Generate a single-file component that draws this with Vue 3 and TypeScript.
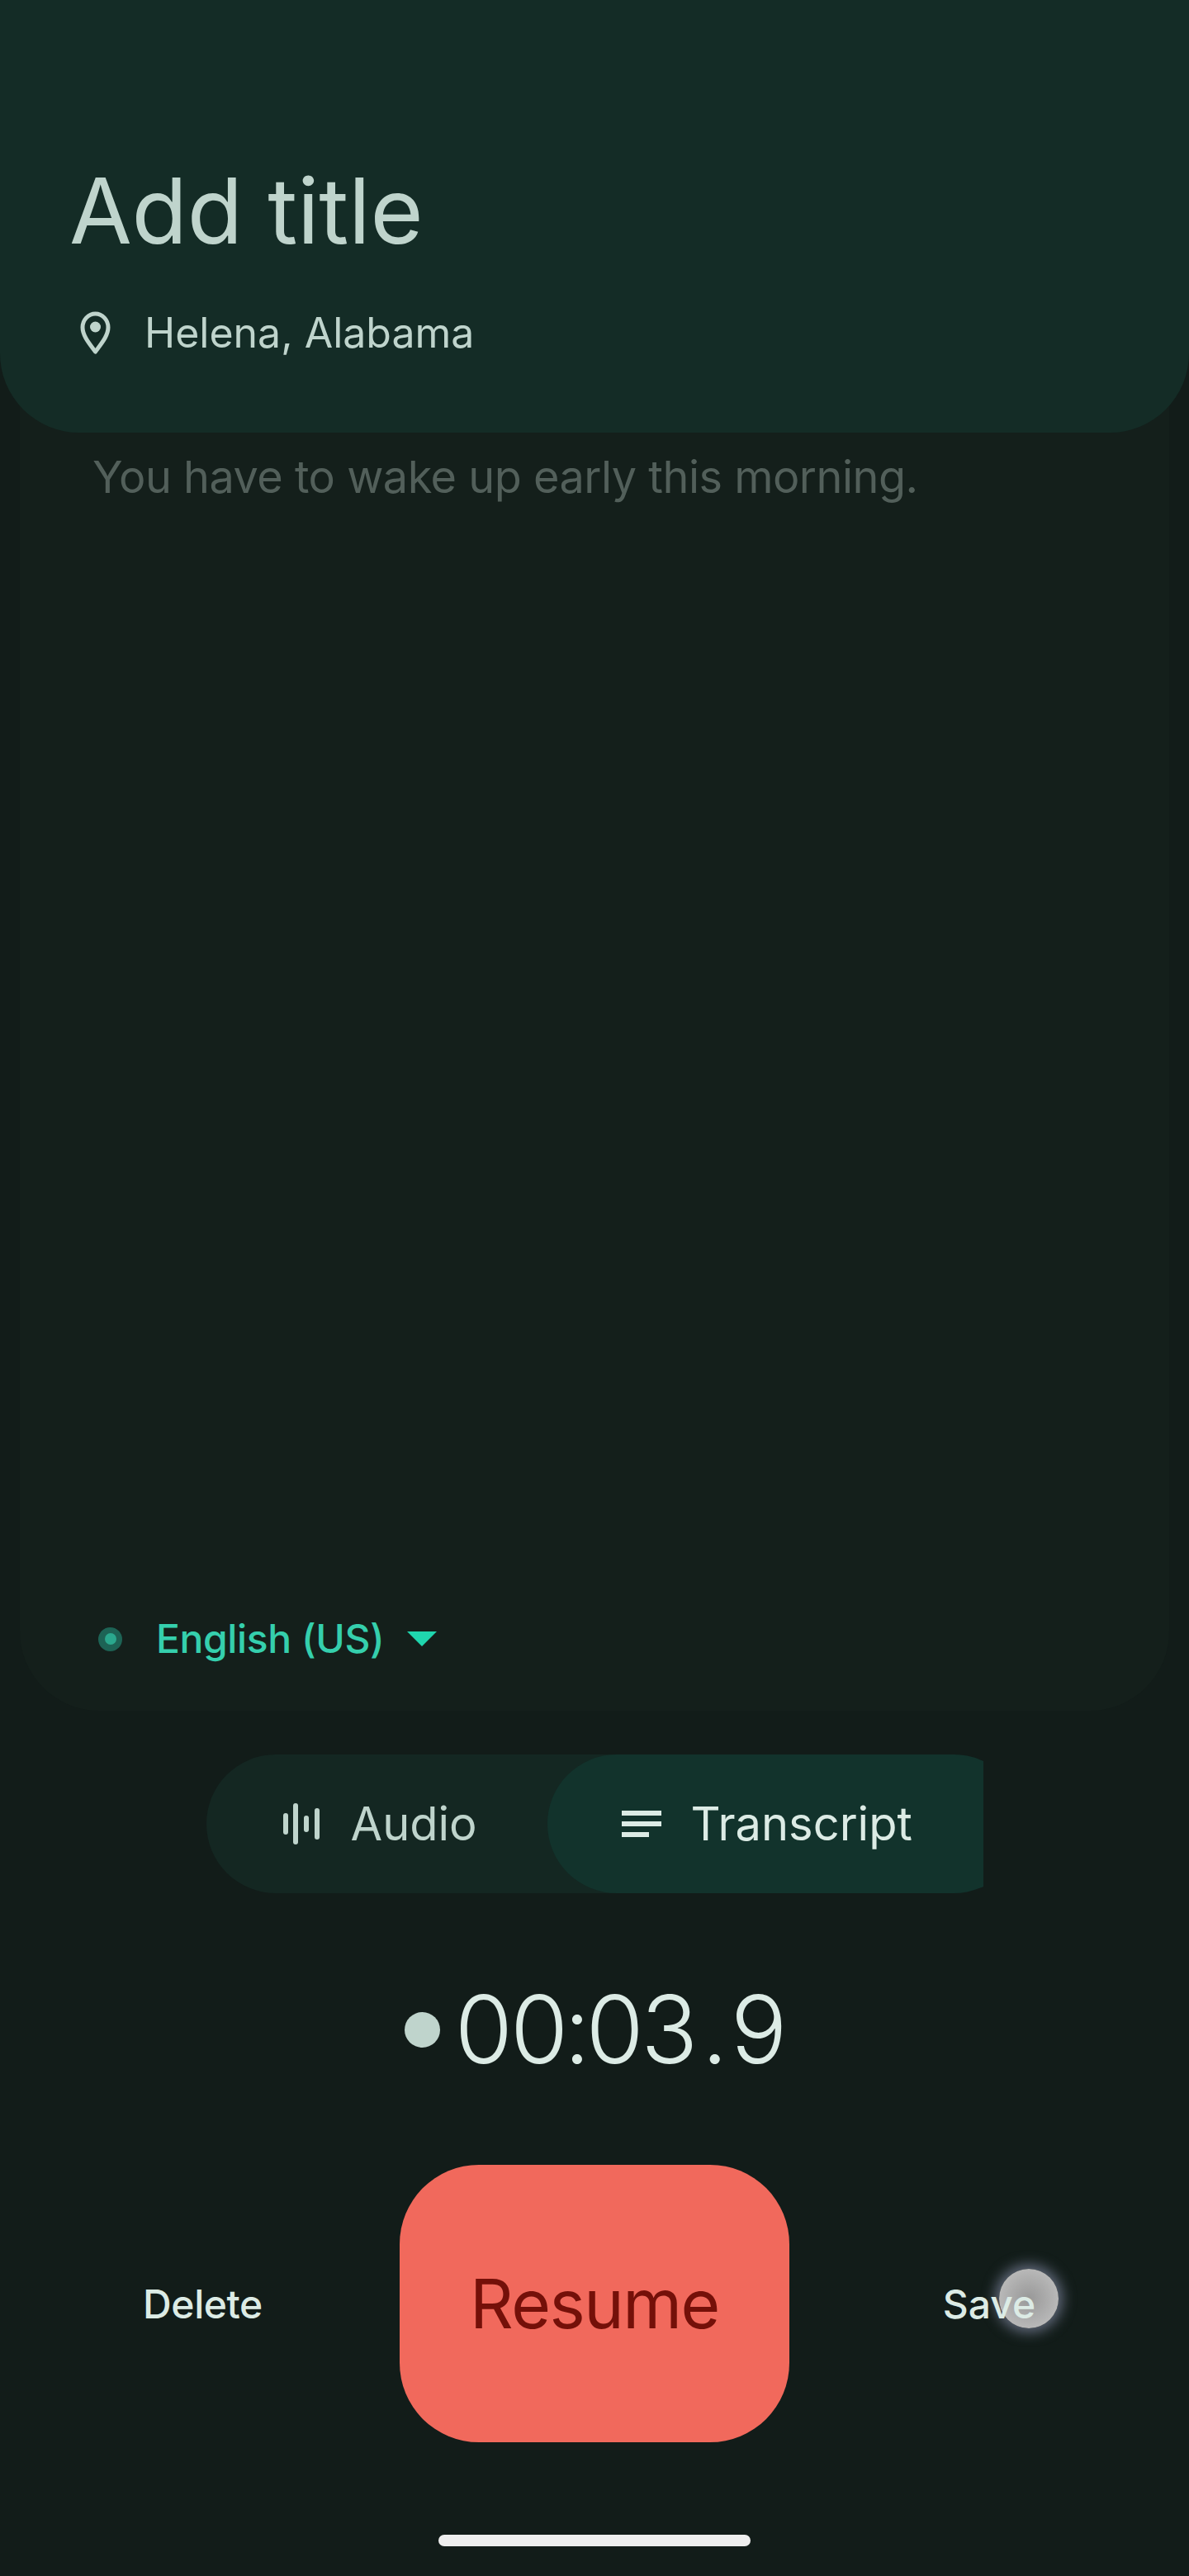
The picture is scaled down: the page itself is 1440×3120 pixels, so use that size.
<script setup lang="ts">
const bars: { h: number }[] = [{ h: 26 }, { h: 50 }, { h: 20 }, { h: 38 }]
</script>

<template>
  <div class="screen">
    <header class="head">
      <h1 class="title">Add title</h1>
      <div class="place">
        <svg class="pin" viewBox="0 0 37 53" width="37" height="53" aria-hidden="true">
          <path d="M18.5 49 C12 40 3 30 3 19.5 C3 10.5 10 3 18.5 3 C27 3 34 10.5 34 19.5 C34 30 25 40 18.5 49 Z" fill="none" stroke="#bfd4cc" stroke-width="5" stroke-linejoin="round" />
          <circle cx="18.5" cy="19" r="6.5" fill="#bfd4cc" />
        </svg>
        <span>Helena, Alabama</span>
      </div>
    </header>

    <section class="card">
      <p class="line">You have to wake up early this morning.</p>
      <div class="lang">
        <span class="live"><i></i></span>
        <span class="lang-name">English (US)</span>
        <span class="caret"></span>
      </div>
    </section>

    <nav class="seg">
      <div class="tab tab-audio">
        <span class="wave">
          <i v-for="(b, n) in bars" :key="n" :style="{ height: b.h + 'px' }"></i>
        </span>
        <span>Audio</span>
      </div>
      <div class="tab tab-text">
        <span class="lines"><i></i><i></i><i class="short"></i></span>
        <span>Transcript</span>
      </div>
    </nav>

    <div class="timer">
      <span class="rec"></span>
      <span class="time">00:03<span class="dot">.</span>9</span>
    </div>

    <div class="actions">
      <button class="text-btn delete">Delete</button>
      <button class="resume">Resume</button>
      <button class="text-btn save">Save<span class="touch"></span></button>
    </div>

    <div class="home"></div>
  </div>
</template>

<style scoped>
.screen {
  width: 1440px;
  height: 3120px;
  background: #121c19;
  display: flex;
  flex-direction: column;
  font-family: Inter, "Liberation Sans", sans-serif;
  overflow: hidden;
}
.head {
  position: relative;
  z-index: 1;
  height: 524px;
  box-sizing: border-box;
  padding: 189px 0 0 84px;
  background: #142c26;
  border-radius: 0 0 96px 96px;
  flex: none;
}
.title {
  margin: 0;
  font-size: 110px;
  line-height: 132px;
  font-weight: 400;
  letter-spacing: -0.3px;
  color: #bfd4cc;
}
.place {
  display: flex;
  align-items: center;
  margin: 52px 0 0 13px;
  gap: 41px;
  font-size: 50px;
  line-height: 60px;
  color: #bfd4cc;
}
.pin { flex: none; }
.card {
  flex: none;
  height: 1644px;
  margin: -96px 24px 0;
  box-sizing: border-box;
  padding: 118px 0 0 88px;
  background: #141f1b;
  border-radius: 0 0 96px 96px;
  display: flex;
  flex-direction: column;
}
.line {
  margin: 0;
  font-size: 54px;
  line-height: 64px;
  letter-spacing: -0.5px;
  color: #525f5a;
}
.lang {
  margin-top: auto;
  margin-bottom: 57px;
  display: flex;
  align-items: center;
  margin-left: 7px;
  font-size: 48px;
  line-height: 60px;
  font-weight: 500;
  letter-spacing: -0.4px;
  color: #35cfad;
}
.live {
  width: 29px;
  height: 29px;
  border-radius: 50%;
  background: #1d6355;
  display: flex;
  align-items: center;
  justify-content: center;
  margin-right: 41px;
}
.live i {
  width: 14px;
  height: 14px;
  border-radius: 50%;
  background: #2aa88e;
}
.caret {
  margin-left: 28px;
  width: 0;
  height: 0;
  border-left: 18px solid transparent;
  border-right: 18px solid transparent;
  border-top: 18px solid #1fd6ae;
}
.seg {
  flex: none;
  align-self: center;
  width: 941px;
  height: 168px;
  margin-top: 53px;
  display: flex;
  overflow: hidden;
}
.tab {
  flex: none;
  height: 168px;
  display: flex;
  align-items: center;
  font-size: 56px;
  box-sizing: border-box;
}
.tab-audio {
  width: 510px;
  padding-left: 93px;
  gap: 38px;
  color: #bfd4cc;
  background: #142722;
  border-radius: 84px 0 0 84px;
}
.tab-text {
  position: relative;
  width: 576px;
  margin-left: -97px;
  padding-left: 90px;
  gap: 36px;
  color: #dcebe5;
  background: #12332c;
  border-radius: 84px;
}
.wave {
  display: flex;
  align-items: center;
  gap: 6.7px;
  width: 44px;
}
.wave i {
  flex: none;
  width: 6px;
  border-radius: 3px;
  background: #bfd4cc;
}
.lines {
  width: 48px;
  display: flex;
  flex-direction: column;
  gap: 7px;
}
.lines i {
  display: block;
  height: 6px;
  background: #dcebe5;
}
.lines .short { width: 33px; }
.timer {
  flex: none;
  height: 120px;
  margin-top: 105px;
  display: flex;
  align-items: center;
  padding-left: 490px;
  color: #dcebe5;
}
.rec {
  width: 43px;
  height: 43px;
  border-radius: 50%;
  background: #bfd4cc;
  margin-right: 16px;
}
.time {
  font-size: 114px;
  line-height: 120px;
  font-weight: 300;
  letter-spacing: -6.5px;
  font-variant-numeric: tabular-nums;
}
.dot { margin: 0 8px; }
.actions {
  flex: none;
  margin-top: 104px;
  display: grid;
  grid-template-columns: 484px 472px 484px;
  align-items: center;
}
.text-btn {
  border: 0;
  background: none;
  padding: 0;
  font: inherit;
  font-size: 48px;
  font-weight: 500;
  color: #dcebe5;
  text-align: center;
}
.delete { padding-left: 7px; letter-spacing: -0.4px; }
.save {
  position: relative;
  z-index: 0;
  justify-self: center;
}
.resume {
  height: 336px;
  border: 0;
  border-radius: 96px;
  background: #f1695c;
  color: #741009;
  font: inherit;
  font-size: 82px;
  letter-spacing: -1.5px;
  padding: 0;
}
.touch {
  position: absolute;
  z-index: -1;
  left: 68px;
  top: -13px;
  width: 72px;
  height: 72px;
  border-radius: 50%;
  background: radial-gradient(circle, #989898, #c6c6c6);
  box-shadow: 0 0 16px 5px rgba(180, 185, 225, 0.5);
}
.home {
  flex: none;
  align-self: center;
  width: 378px;
  height: 14px;
  margin-top: 112px;
  border-radius: 7px;
  background: #eeeeee;
}
</style>
